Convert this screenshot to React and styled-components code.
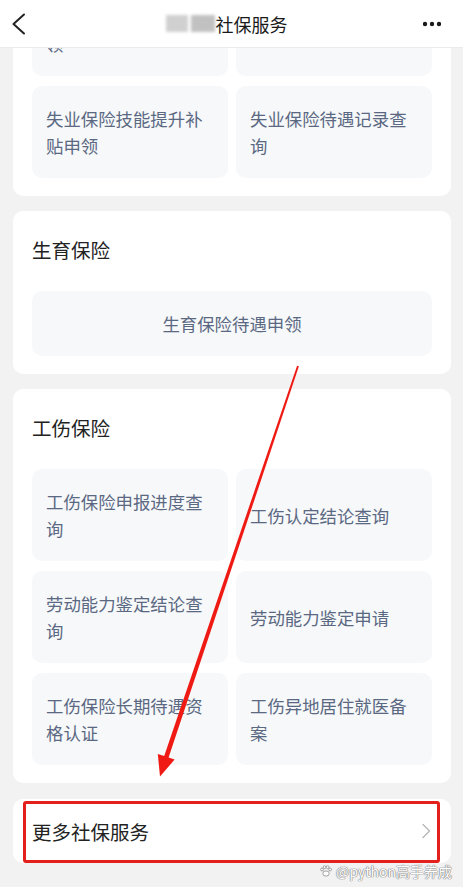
import React, { useLayoutEffect, useRef } from "react";
import styled, { createGlobalStyle } from "styled-components";

const GlobalStyle = createGlobalStyle`
  * { box-sizing: border-box; }
  html, body {
    margin: 0;
    padding: 0;
    background: #f2f2f2;
    font-family: "Noto Sans CJK SC", "Noto Sans", sans-serif;
  }
`;

const Page = styled.div`
  position: relative;
  width: 463px;
  height: 887px;
  display: flex;
  flex-direction: column;
  overflow: hidden;
  background: #f2f2f2;
`;

const Header = styled.header`
  flex: 0 0 48px;
  height: 48px;
  display: grid;
  grid-template-columns: 48px 1fr 48px;
  align-items: center;
  background: #ffffff;
  border-bottom: 1px solid #ebebeb;
`;

const IconButton = styled.button`
  all: unset;
  display: flex;
  align-items: center;
  justify-content: ${(p) => (p.$end ? "flex-end" : "flex-start")};
  padding: ${(p) => (p.$end ? "0 21px 0 0" : "0 0 0 12px")};
  height: 100%;
`;

const Title = styled.h1`
  margin: 0;
  display: flex;
  align-items: center;
  justify-content: center;
  font-size: 18px;
  font-weight: 400;
  color: #1a1a1a;
  line-height: 24px;
  padding-right: 10px;
`;

const CityMask = styled.span`
  display: inline-flex;
  gap: 3px;
  margin-right: 1px;
  filter: blur(1.4px);
  opacity: 0.7;
`;

const MaskBlock = styled.span`
  display: block;
  width: ${(p) => p.$w}px;
  height: 17px;
  background: ${(p) => p.$c};
`;

const Viewport = styled.main`
  flex: 1;
  overflow: hidden;
`;

const List = styled.div`
  display: flex;
  flex-direction: column;
  gap: 15px;
  padding: 12px 12px 60px 13px;
`;

const Card = styled.section`
  background: #ffffff;
  border-radius: 10px;
  padding: 24px 19px 18px 19px;
`;

const CardTitle = styled.h2`
  margin: 0 0 26px;
  font-size: 19.5px;
  line-height: 30px;
  font-weight: 400;
  color: #222222;
`;

const Grid = styled.div`
  display: grid;
  grid-template-columns: ${(p) => (p.$single ? "1fr" : "1fr 1fr")};
  column-gap: 8px;
  row-gap: 10px;
`;

const Item = styled.div`
  display: flex;
  align-items: center;
  justify-content: ${(p) => (p.$center ? "center" : "flex-start")};
  text-align: ${(p) => (p.$center ? "center" : "left")};
  min-height: 65px;
  padding: 19px 14px 19px 14px;
  background: #f6f8fa;
  border-radius: 10px;
  font-size: 17.4px;
  line-height: 27px;
  color: #5b6882;
`;

const MoreCard = styled.section`
  position: relative;
  margin-top: 1px;
  height: 64px;
  display: flex;
  align-items: center;
  justify-content: space-between;
  padding: 0 20px 0 19px;
  background: #ffffff;
  border-radius: 10px;
  font-size: 19.5px;
  color: #222222;
`;

const Highlight = styled.span`
  position: absolute;
  left: 10px;
  right: 11px;
  top: 2px;
  bottom: 0;
  border: 3px solid #e3201c;
  border-radius: 3px;
  pointer-events: none;
`;

const Overlay = styled.svg`
  position: absolute;
  left: 0;
  top: 0;
  pointer-events: none;
`;

const Watermark = styled.div`
  position: absolute;
  right: 11px;
  bottom: 7px;
  display: flex;
  align-items: center;
  gap: 3px;
  font-family: "Noto Sans CJK SC", "Noto Sans", sans-serif;
  font-size: 14px;
  line-height: 18px;
  color: #ffffff;
  text-shadow: 0 0 1px #7d7d7d, 0 0 1px #7d7d7d, 0 0 1px #7d7d7d;
  pointer-events: none;
`;

const sections = [
  {
    title: "失业保险",
    items: [
      "失业保险金申领",
      "失业登记",
      "丧葬补助金抚恤金申领",
      "稳岗返还申领",
      "失业保险技能提升补贴申领",
      "失业保险待遇记录查询",
    ],
  },
  {
    title: "生育保险",
    single: true,
    items: ["生育保险待遇申领"],
  },
  {
    title: "工伤保险",
    items: [
      "工伤保险申报进度查询",
      "工伤认定结论查询",
      "劳动能力鉴定结论查询",
      "劳动能力鉴定申请",
      "工伤保险长期待遇资格认证",
      "工伤异地居住就医备案",
    ],
  },
];

const BackIcon = () => (
  <svg width="14" height="22" viewBox="0 0 14 22" fill="none">
    <polyline points="12,1.5 1.5,11 12,20.5" stroke="#222" strokeWidth="2" strokeLinecap="round" strokeLinejoin="round" />
  </svg>
);

const MoreIcon = () => (
  <svg width="20" height="6" viewBox="0 0 20 6">
    <circle cx="3" cy="3" r="2.2" fill="#1a1a1a" />
    <circle cx="10" cy="3" r="2.2" fill="#1a1a1a" />
    <circle cx="17" cy="3" r="2.2" fill="#1a1a1a" />
  </svg>
);

const Chevron = () => (
  <svg width="10" height="16" viewBox="0 0 10 16" fill="none">
    <polyline points="2,1.5 8.5,8 2,14.5" stroke="#b8b8b8" strokeWidth="1.4" strokeLinecap="round" strokeLinejoin="round" />
  </svg>
);

const PawIcon = () => (
  <svg width="14" height="14" viewBox="0 0 14 14" fill="#fff" stroke="#8a8a8a" strokeWidth="0.8">
    <ellipse cx="7" cy="9.5" rx="3.2" ry="2.6" />
    <circle cx="3" cy="5.5" r="1.4" />
    <circle cx="5.6" cy="3.2" r="1.4" />
    <circle cx="8.6" cy="3.2" r="1.4" />
    <circle cx="11.1" cy="5.5" r="1.4" />
  </svg>
);

// Red tapered arrow drawn over the page, pointing at the "more" entry
const Arrow = () => (
  <Overlay width="463" height="887" viewBox="0 0 463 887">
    <polygon
      points="297.1,365.7 164.2,756.0 157.8,754.0 160,776.5 174.6,759.6 168.6,757.6 298.9,366.3"
      fill="#f01a14"
    />
  </Overlay>
);

export default function App() {
  const viewportRef = useRef(null);
  const anchorRef = useRef(null);

  // The list is shown scrolled part-way down: the 生育保险 card sits 163px below the header.
  useLayoutEffect(() => {
    const vp = viewportRef.current;
    const anchor = anchorRef.current;
    if (!vp || !anchor) return;
    const offset = anchor.getBoundingClientRect().top - vp.getBoundingClientRect().top;
    vp.scrollTop = vp.scrollTop + offset - 163;
  }, []);

  return (
    <Page>
      <GlobalStyle />
      <Header>
        <IconButton aria-label="返回">
          <BackIcon />
        </IconButton>
        <Title>
          <CityMask aria-hidden="true">
            <MaskBlock $w={22} $c="#bdbdbd" />
            <MaskBlock $w={24} $c="#a8a8a8" />
          </CityMask>
          社保服务
        </Title>
        <IconButton $end aria-label="更多">
          <MoreIcon />
        </IconButton>
      </Header>
      <Viewport ref={viewportRef}>
        <List>
          {sections.map((s) => (
            <Card key={s.title} ref={s.single ? anchorRef : undefined}>
              <CardTitle>{s.title}</CardTitle>
              <Grid $single={s.single}>
                {s.items.map((it) => (
                  <Item key={it} $center={s.single}>
                    {it}
                  </Item>
                ))}
              </Grid>
            </Card>
          ))}
          <MoreCard>
            <span>更多社保服务</span>
            <Chevron />
            <Highlight />
          </MoreCard>
        </List>
      </Viewport>
      <Arrow />
      <Watermark>
        <PawIcon />
        <span>@python高手养成</span>
      </Watermark>
    </Page>
  );
}
